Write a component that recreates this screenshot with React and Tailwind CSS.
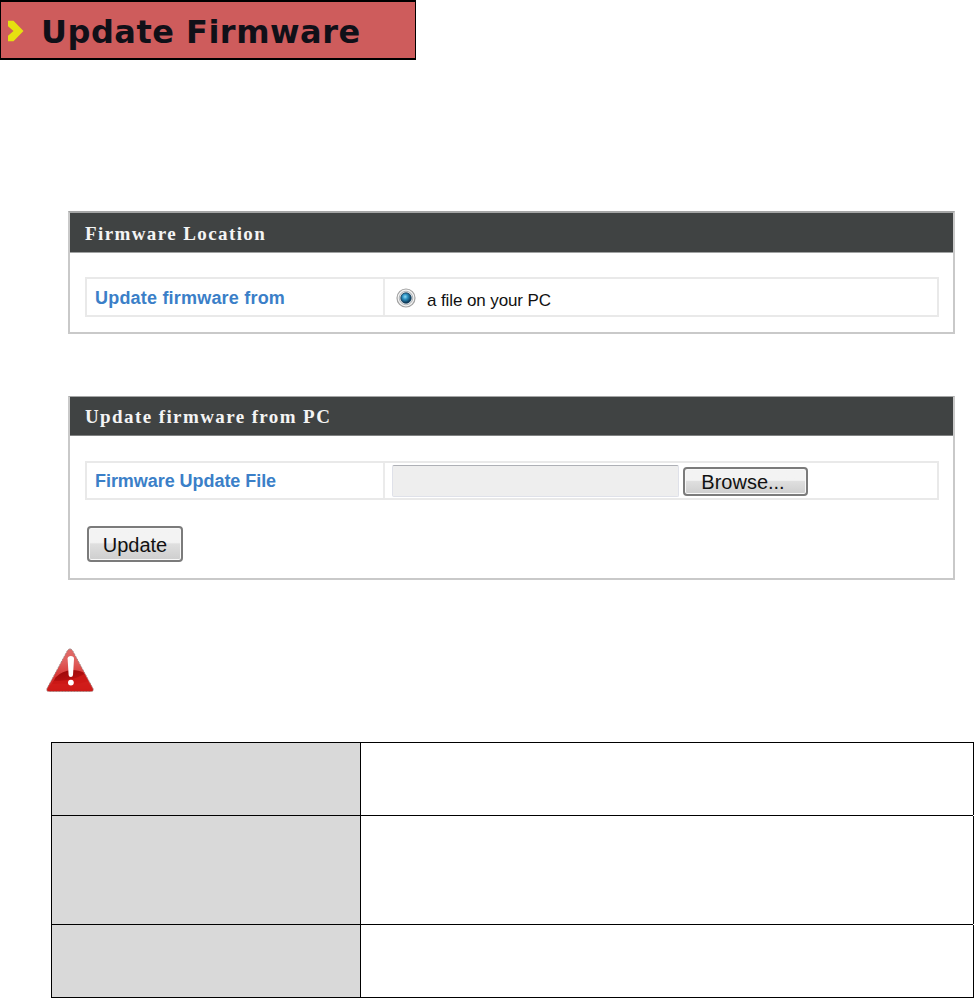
import React, { useState } from "react";

// warning triangle
function WarningIcon() {
  return (
    <svg className="block ml-[46px] mt-[68px]" width="48" height="44" viewBox="0 0 48 44">
      <defs>
        <linearGradient id="warn" x1="0" y1="0" x2="0" y2="1">
          <stop offset="0" stopColor="#e06a68" />
          <stop offset="0.3" stopColor="#e0605e" />
          <stop offset="0.6" stopColor="#d83a38" />
          <stop offset="1" stopColor="#cc1816" />
        </linearGradient>
        <linearGradient id="shade" x1="0" y1="0" x2="0.6" y2="1">
          <stop offset="0" stopColor="#920808" />
          <stop offset="1" stopColor="#c41212" />
        </linearGradient>
      </defs>
      <path d="M24 1 Q25.8 1 26.8 3 L47 40.5 Q48 43.5 45 43.5 H3 Q0 43.5 1 40.5 L21.2 3 Q22.2 1 24 1Z" fill="url(#warn)" stroke="#a08280" strokeWidth="0.9" strokeDasharray="2 1" />
      <path d="M9.5 29.5 Q16 22.5 26 22 Q33 22 37.5 24.5 L42 33.5 Q34 36 24 36 Q12 35.5 6 36Z" fill="url(#shade)" />
      <path d="M8 32.5 Q24 34 38.5 26 L44.5 38.5 Q45 41 43 41.5 H4.5 Q3 40.5 3.5 39Z" fill="#cf1a18" opacity="0.8" />
      <path d="M21.6 10.5 Q21.8 8 24.8 8 Q27.8 8 28 10.5 L27 27 Q26.8 29 24.8 29 Q22.8 29 22.6 27Z" fill="#fff" />
      <circle cx="24.9" cy="34.6" r="2.9" fill="#fff" />
    </svg>
  );
}

function Radio({ checked, onClick }) {
  return (
    <svg className="cursor-pointer shrink-0 mt-px" onClick={onClick} width="20" height="20" viewBox="0 0 20 20">
      <defs>
        <radialGradient id="dot" cx="0.42" cy="0.38" r="0.6">
          <stop offset="0" stopColor="#8fdcf5" />
          <stop offset="0.4" stopColor="#2f94c4" />
          <stop offset="1" stopColor="#0b3350" />
        </radialGradient>
      </defs>
      <circle cx="10" cy="10" r="9" fill="#f4f4f4" stroke="#a2a2a2" strokeWidth="1.2" />
      <circle cx="10" cy="10" r="6.8" fill="#dcdfe1" stroke="#b4b8bb" strokeWidth="1" />
      {checked && <circle cx="10" cy="10" r="5.2" fill="url(#dot)" stroke="#17405e" strokeWidth="0.8" />}
    </svg>
  );
}

function FormRow({ label, labelClass, className, children }) {
  return (
    <div className={`ml-[15px] mr-[14px] flex border-2 border-[#e9e9e9] ${className}`}>
      <div className={`w-[298px] shrink-0 pl-2 pt-[2px] border-r-2 border-[#ebebeb] flex items-center font-bold text-[18px] text-[#3b7fc8] ${labelClass}`}>
        {label}
      </div>
      {children}
    </div>
  );
}

const buttonStyle =
  "border-2 border-[#7b7b7b] rounded-[4px] bg-linear-to-b from-[#f3f3f3] from-45% via-[#dfdfdf] via-50% to-[#cecece] text-[20px] leading-none text-[#111] shadow-[inset_0_0_0_1px_#f8f8f8] whitespace-nowrap";

const rows = ["h-[72px]", "h-[108px]", "h-[72px]"];

export default function App() {
  const [fromPc, setFromPc] = useState(true);

  return (
    <div className="w-[974px] h-[998px] overflow-hidden bg-white font-['Liberation_Sans',Arial,sans-serif]">
      <div className="w-[416px] h-[60px] border-x border-y-2 border-black bg-[#ce5c5c] flex items-center">
        <svg className="ml-[7px] mt-px" width="16" height="22" viewBox="0 0 16 22">
          <path d="M0 0.8 H5.5 L15.5 11 L5.5 21.2 H0 V15.8 L5.5 11 L0 6.2Z" fill="#e6e010" />
        </svg>
        <h1 className="ml-[17px] mt-[4px] text-[32px] leading-none tracking-[0.5px] font-bold text-[#101018] whitespace-nowrap font-['DejaVu_Sans',Verdana,sans-serif]">
          Update Firmware
        </h1>
      </div>

      <section className="mt-[151px] ml-[68px] w-[887px] h-[123px] border-2 border-[#c9c9c9] border-t-[#a5a6a6]">
        <h2 className="h-[40px] bg-[#404343] border-b border-[#a0a2a2] pl-[15px] pt-[3px] flex items-center font-bold text-[19px] tracking-[1.4px] text-[#f4f4f4] font-['Liberation_Serif','Times_New_Roman',serif]">
          Firmware Location
        </h2>
        <FormRow label="Update firmware from" className="mt-6 h-[40px]" labelClass="tracking-[0.2px]">
          <div className="flex items-center pl-[11px]">
            <Radio checked={fromPc} onClick={() => setFromPc(true)} />
            <span className="ml-[11px] mt-[7px] text-[17px] tracking-[-0.1px] text-[#111]">a file on your PC</span>
          </div>
        </FormRow>
      </section>

      <section className="mt-[62px] ml-[68px] w-[887px] h-[184px] border-2 border-t border-[#c9c9c9] border-t-[#a5a6a6]">
        <h2 className="h-[39px] bg-[#404343] border-b border-[#808282] pl-[15px] pt-[2px] flex items-center font-bold text-[19px] tracking-[1.4px] text-[#f4f4f4] font-['Liberation_Serif','Times_New_Roman',serif]">
          Update firmware from PC
        </h2>
        <FormRow label="Firmware Update File" className="mt-[25px] h-[39px]" labelClass="tracking-[-0.05px]">
          <div className="flex items-center pl-[7px]">
            <div className="w-[287px] h-[32px] bg-[#eeeeee] border border-[#dfe1e9] border-t-[#aeb0b6] rounded-[2px]" />
            <button className={`ml-[4px] mt-px w-[125px] h-[29px] pr-[5px] pt-px ${buttonStyle}`}>Browse...</button>
          </div>
        </FormRow>
        <button className={`block mt-[26px] ml-[17px] w-[96px] h-[36px] pt-px ${buttonStyle}`}>Update</button>
      </section>

      <WarningIcon />

      <div className="mt-[50px] ml-[51px] w-[923px]">
        <div className="h-px bg-black" />
        {rows.map((height, i) => (
          <div key={i}>
            <div className={`flex border-x border-black ${height}`}>
              <div className="w-[309px] bg-[#d9d9d9] border-r border-black" />
            </div>
            <div className={`h-px bg-black ${i < rows.length - 1 ? "mr-px" : ""}`} />
          </div>
        ))}
      </div>
    </div>
  );
}
